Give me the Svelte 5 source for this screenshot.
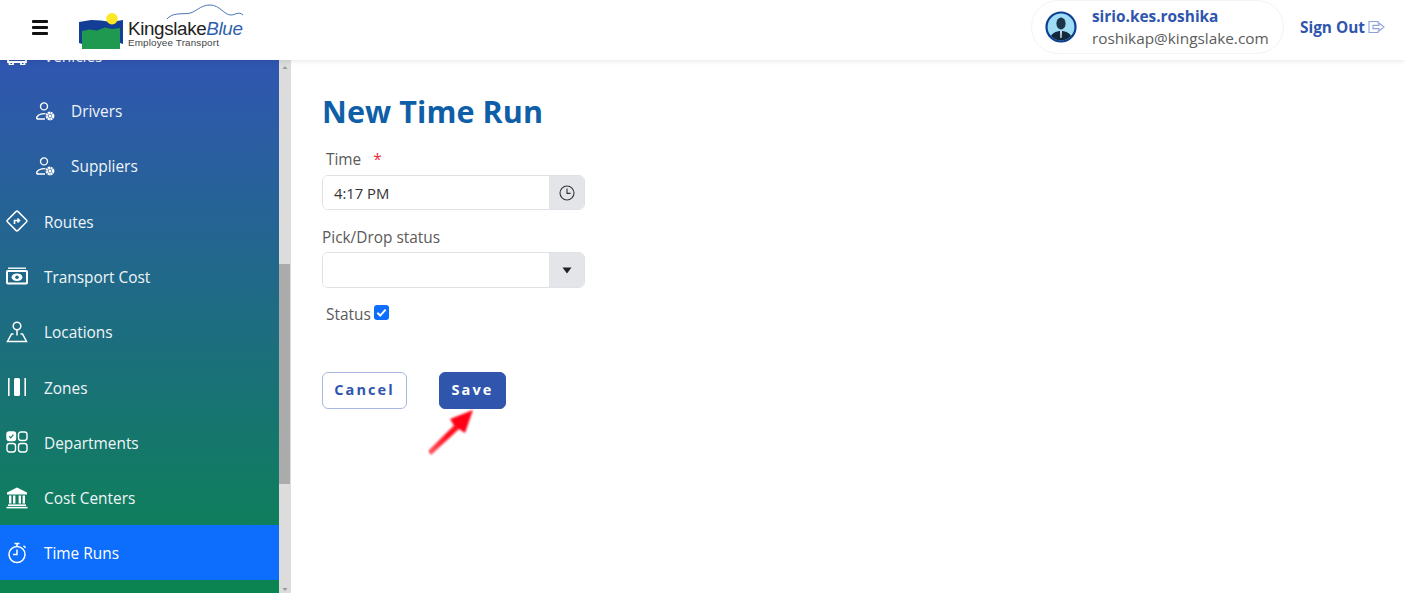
<script>
  const items = [
    { label: 'Vehicles', icon: 'bus' },
    { label: 'Drivers', icon: 'usergear', sub: true },
    { label: 'Suppliers', icon: 'usergear', sub: true },
    { label: 'Routes', icon: 'route' },
    { label: 'Transport Cost', icon: 'money' },
    { label: 'Locations', icon: 'pin' },
    { label: 'Zones', icon: 'zones' },
    { label: 'Departments', icon: 'dept' },
    { label: 'Cost Centers', icon: 'bank' },
    { label: 'Time Runs', icon: 'timer', active: true }
  ];
</script>

<div class="page">
  <header class="topbar">
    <button class="burger" aria-label="Menu"><span></span><span></span><span></span></button>
    <div class="logo">
      <svg class="mark" width="44" height="36" viewBox="0 0 44 36">
        <path d="M0 9 L12 7 L22 7.5 L32 9 L44 7 V31 L41 30 H3 V31 L0 30 Z" fill="#123f95" />
        <path d="M3 18 L10 16.5 L18 17.5 L26 14.5 L33 16 L41 15 V36 H3 Z" fill="#1f9850" />
        <circle cx="33" cy="5.7" r="5.7" fill="#fde725" />
      </svg>
      <div class="wordmark">
        <svg class="swoosh" width="78" height="16" viewBox="0 0 78 16">
          <path d="M1 15 C6 9 14 10 22 9.5 C30 8.5 34 1 44 1 C54 1 58 11 65 11 C69 11 73 7 77 11" fill="none" stroke="#4a75b5" stroke-width="1" />
        </svg>
        <div class="brand">Kingslake<em>Blue</em></div>
        <div class="tag">Employee Transport</div>
      </div>
    </div>
    <div class="spacer"></div>
    <div class="userpill">
      <svg class="avatar" width="32" height="32" viewBox="0 0 32 32">
        <circle cx="16" cy="16" r="14.5" fill="#9fdcf5" stroke="#0b3f8f" stroke-width="2.2" />
        <clipPath id="av"><circle cx="16" cy="16" r="13.4" /></clipPath>
        <g clip-path="url(#av)">
          <path d="M4 31 C5 22 11 20 16 20 C21 20 27 22 28 31 Z" fill="#13283c" />
          <ellipse cx="16" cy="12.5" rx="4.6" ry="6" fill="#1d3548" />
          <path d="M15 20 L17 20 L16.6 27 H15.4 Z" fill="#cfeaf6" />
        </g>
      </svg>
      <div class="usertext">
        <div class="uname">sirio.kes.roshika</div>
        <div class="umail">roshikap@kingslake.com</div>
      </div>
    </div>
    <a class="signout" href="#signout">Sign Out
      <svg width="17" height="14" viewBox="0 0 17 14" fill="none" stroke="#8ea3d6" stroke-width="1.1">
        <path d="M10 3.5 V1.5 H1 V12.5 H10 V10.5" />
        <path d="M5 5.4 H11 V3 L16 7 L11 11 V8.6 H5 Z" />
      </svg>
    </a>
  </header>

  <div class="body">
    <aside class="sidebar">
      <nav class="nav">
        <ul>
          {#each items as it}
            <li class:active={it.active} class:sub={it.sub}>
              <span class="ico">
                {#if it.icon === 'bus'}
                  <svg width="20" height="20" viewBox="0 0 20 20" fill="none" stroke="#fff" stroke-width="1.8"><path d="M3 4 H17 L19 9 V17 H1 V9 Z" /><path d="M2.5 17 V20 H6 V17 M14 17 V20 H17.5 V17" /></svg>
                {:else if it.icon === 'usergear'}
                  <svg width="20" height="20" viewBox="0 0 20 20" fill="none" stroke="#fff" stroke-width="1.4">
                    <circle cx="9" cy="5.4" r="3.5" />
                    <path d="M1.8 18 C1 14.5 5 12.6 10.5 12.6 M1.8 18 H10" />
                    <circle cx="15" cy="15" r="3.1" stroke-width="2.6" stroke-dasharray="2 0.45" />
                    <circle cx="15" cy="15" r="1.3" fill="#fff" stroke="none" />
                  </svg>
                {:else if it.icon === 'route'}
                  <svg width="22" height="22" viewBox="0 0 22 22" fill="none" stroke="#fff" stroke-width="1.5">
                    <rect x="3.6" y="3.6" width="14.8" height="14.8" rx="1.5" transform="rotate(45 11 11)" />
                    <path d="M8.5 14 V10.5 H13 M11.5 8.5 L13.5 10.5 L11.5 12.5" stroke-width="1.6" />
                  </svg>
                {:else if it.icon === 'money'}
                  <svg width="22" height="18" viewBox="0 0 22 18" fill="none" stroke="#fff">
                    <path d="M2 1.2 H20" stroke-width="1.4" />
                    <rect x="1" y="4" width="20" height="12.5" rx="0.8" stroke-width="2" />
                    <ellipse cx="11" cy="10.2" rx="5.4" ry="3.8" fill="#fff" stroke="none" />
                    <circle cx="11" cy="10.2" r="1.8" fill="#1c6a8e" stroke="none" />
                  </svg>
                {:else if it.icon === 'pin'}
                  <svg width="22" height="22" viewBox="0 0 22 22" fill="none" stroke="#fff" stroke-width="1.5">
                    <circle cx="11" cy="5" r="3.8" />
                    <path d="M11 9 V14.5 M7.5 13 H5.5 L1.5 20.5 H20.5 L16.5 13 H14.5" />
                  </svg>
                {:else if it.icon === 'zones'}
                  <svg width="20" height="18" viewBox="0 0 20 18">
                    <rect x="1" y="0" width="1.6" height="18" fill="#fff" />
                    <rect x="7" y="0" width="6" height="18" rx="1.5" fill="#fff" />
                    <rect x="17.4" y="0" width="1.6" height="18" fill="#fff" />
                  </svg>
                {:else if it.icon === 'dept'}
                  <svg width="22" height="22" viewBox="0 0 22 22" fill="none" stroke="#fff" stroke-width="1.4">
                    <rect x="1" y="1" width="8.5" height="8.5" rx="2" fill="#fff" />
                    <path d="M3.2 5.2 L4.8 6.8 L7.4 3.6" stroke="#127a6b" stroke-width="1.2" />
                    <rect x="12.5" y="1" width="8.5" height="8.5" rx="2.4" />
                    <rect x="1" y="12.5" width="8.5" height="8.5" rx="2.4" />
                    <rect x="12.5" y="12.5" width="8.5" height="8.5" rx="2.4" />
                  </svg>
                {:else if it.icon === 'bank'}
                  <svg width="22" height="22" viewBox="0 0 22 22" fill="#fff">
                    <path d="M11 0.5 L21 5.5 V7.5 H1 V5.5 Z" />
                    <rect x="3" y="8.5" width="2.4" height="8" /><rect x="7" y="8.5" width="2.4" height="8" />
                    <rect x="12.6" y="8.5" width="2.4" height="8" /><rect x="16.6" y="8.5" width="2.4" height="8" />
                    <rect x="2" y="17.4" width="18" height="1.6" /><rect x="0.5" y="19.8" width="21" height="1.6" />
                  </svg>
                {:else if it.icon === 'timer'}
                  <svg width="20" height="22" viewBox="0 0 20 22" fill="none" stroke="#fff" stroke-width="1.5">
                    <circle cx="10" cy="12.5" r="8" />
                    <path d="M10 7.5 V12.5 H6" />
                    <path d="M7.5 1.5 H12.5 M10 1.5 V4.5 M16.5 3.8 L18.5 5.8" />
                  </svg>
                {/if}
              </span>
              <span class="lbl">{it.label}</span>
            </li>
          {/each}
        </ul>
      </nav>
      <div class="scrollbar">
        <svg class="arrow" width="12" height="6" viewBox="0 0 12 6"><path d="M3.5 5 L6 2 L8.5 5 Z" fill="#9a9a9a" /></svg>
        <div class="thumb"></div>
        <svg class="arrow down" width="12" height="6" viewBox="0 0 12 6"><path d="M3.5 1 L6 4 L8.5 1 Z" fill="#9a9a9a" /></svg>
      </div>
    </aside>

    <main class="main">
      <h1>New Time Run</h1>
      <div class="label indented">Time <span class="req">*</span></div>
      <div class="group first">
        <div class="control time">4:17 PM</div>
        <div class="addon">
          <svg width="16" height="16" viewBox="0 0 16 16" fill="none" stroke="#333" stroke-width="1.1"><circle cx="8" cy="8" r="7" /><path d="M8 3.6 V8.4 H11.6" /></svg>
        </div>
      </div>
      <div class="label">Pick/Drop status</div>
      <div class="group second">
        <div class="control"></div>
        <div class="addon">
          <svg width="10" height="7" viewBox="0 0 10 7"><path d="M0.5 0.5 H9.5 L5 6.5 Z" fill="#222" /></svg>
        </div>
      </div>
      <div class="statusrow">
        <span class="label-inline">Status</span>
        <span class="check">
          <svg width="15" height="15" viewBox="0 0 15 15"><path d="M3.4 7.8 L6.2 10.6 L11.6 4.6" fill="none" stroke="#fff" stroke-width="2" /></svg>
        </span>
      </div>
      <div class="actions">
        <button class="btn cancel">Cancel</button>
        <button class="btn save">Save</button>
        <svg class="redarrow" width="50" height="50" viewBox="0 0 50 50">
          <defs>
            <linearGradient id="shaft" x1="0" y1="1" x2="1" y2="0">
              <stop offset="0" stop-color="#ff5a68" />
              <stop offset="0.45" stop-color="#ff0a1e" />
              <stop offset="1" stop-color="#ff0010" />
            </linearGradient>
            <filter id="soft"><feGaussianBlur stdDeviation="0.8" /></filter>
          </defs>
          <path d="M3 47 L0 43 L26 17.5 L22 11 L45 2 L37 25 L31 21 Z" fill="url(#shaft)" filter="url(#soft)" />
        </svg>
      </div>
    </main>
  </div>
</div>

<style>
  :global(body) { margin: 0; background: #fff; font-family: "Open Sans", "Noto Sans", sans-serif; }
  .page { width: 1405px; height: 608px; overflow: hidden; background: #fff; }

  .topbar {
    height: 60px; display: flex; align-items: center; background: #fff;
    box-shadow: 0 1px 5px rgba(0,0,0,.1); position: relative; z-index: 2;
  }
  .burger { width: 16px; height: 15px; margin: -6px 0 0 32px; padding: 0; border: 0; background: none; display: flex; flex-direction: column; justify-content: space-between; }
  .burger span { display: block; height: 3px; background: #111; border-radius: 1px; }
  .logo { display: flex; align-items: flex-start; margin-left: 31px; height: 60px; box-sizing: border-box; padding-top: 13px; }
  .wordmark { position: relative; margin-left: 5px; padding-top: 6px; }
  .swoosh { position: absolute; left: 38px; top: -9px; }
  .brand { font: 400 18.8px/20px "Liberation Sans", Arial, sans-serif; color: #222; letter-spacing: -0.35px; }
  .brand em { color: #2f5fae; font-style: italic; }
  .tag { font: 400 9.9px/10px "Liberation Sans", Arial, sans-serif; color: #444; margin-top: -1px; letter-spacing: 0.15px; }
  .spacer { flex: 1; }
  .userpill {
    width: 253px; height: 54px; box-sizing: border-box; border: 1px solid #f3f3f3; border-radius: 27px;
    display: flex; align-items: center; padding-left: 13px; margin-top: -6px; background: #fff;
  }
  .usertext { margin: 2px 0 0 15px; }
  .uname { font-size: 15.4px; line-height: 20px; font-weight: 700; color: #2f55ad; }
  .umail { font-size: 15.35px; line-height: 22px; color: #5c5c5c; }
  .signout { display: flex; align-items: center; gap: 3px; margin: -6px 20px 0 16px; font-size: 15.4px; font-weight: 700; color: #2f55ad; text-decoration: none; }

  .body { display: flex; height: 533px; }
  .sidebar { display: flex; width: 291px; flex: none; }
  .nav { width: 279px; overflow: hidden; background: linear-gradient(180deg, #3056b1 0%, #0a8450 100%); }
  .nav ul { list-style: none; margin: -32.6px 0 0; padding: 0; }
  .nav li { height: 55.33px; box-sizing: border-box; padding-top: 2px; display: flex; align-items: center; color: #f0f5f8; font-size: 15.4px; padding-left: 6px; }
  .nav li.sub { padding-left: 35px; }
  .nav li.sub .lbl { margin-left: 16px; }
  .nav li.active { background: #0d6efd; color: #fff; height: 55px; padding-top: 2px; }
  .ico { width: 22px; display: flex; justify-content: center; flex: none; margin-top: -2px; }
  .sub .ico { width: 20px; margin-top: -1px; }
  .lbl { margin-left: 16px; }

  .scrollbar { width: 12px; background: #dcdcdc; display: flex; flex-direction: column; position: relative; }
  .arrow { display: block; margin-top: 4px; flex: none; }
  .arrow.down { position: absolute; left: 0; bottom: 0; }
  .thumb { width: 11px; height: 220px; margin-top: 194px; background: #ababab; }

  .main { flex: 1; padding: 32px 0 0 31px; color: #555; }
  h1 { margin: 0 0 20px; font-size: 30.5px; line-height: 38px; font-weight: 700; color: #0f5fa8; letter-spacing: 0.1px; }
  .label { font-size: 15.4px; line-height: 20px; color: #5a5a5a; }
  .label.indented { padding-left: 4px; }
  .req { color: #ee3038; margin-left: 8px; }
  .group { width: 263px; display: flex; border: 1px solid #dee2e6; border-radius: 6px; overflow: hidden; box-sizing: border-box; }
  .group.first { height: 35px; margin-top: 5px; margin-bottom: 18px; }
  .group.second { height: 36px; margin-top: 4px; margin-bottom: 16px; }
  .control { flex: 1; padding-left: 11px; font-size: 14.8px; color: #333; display: flex; align-items: center; background: #fff; }
  .addon { width: 35px; background: #e3e5e9; display: flex; align-items: center; justify-content: center; }
  .statusrow { display: flex; align-items: center; padding-left: 4px; height: 20px; }
  .label-inline { font-size: 15.4px; color: #5a5a5a; }
  .check { width: 15px; height: 15px; background: #0d6efd; border-radius: 3px; margin: -3px 0 0 3px; display: block; }
  .check svg { display: block; }
  .actions { position: relative; display: flex; gap: 32px; margin-top: 48px; }
  .btn { height: 37px; font-family: inherit; font-size: 14.5px; font-weight: 700; letter-spacing: 2.1px; border-radius: 6px; padding: 0 0 2px; box-sizing: border-box; }
  .cancel { width: 85px; background: #fff; color: #2f55ad; border: 1px solid #a9b8e0; }
  .save { width: 67px; background: #2f55ad; color: #fff; border: 1px solid #2f55ad; }
  .redarrow { position: absolute; left: 106px; top: 36px; }
</style>
